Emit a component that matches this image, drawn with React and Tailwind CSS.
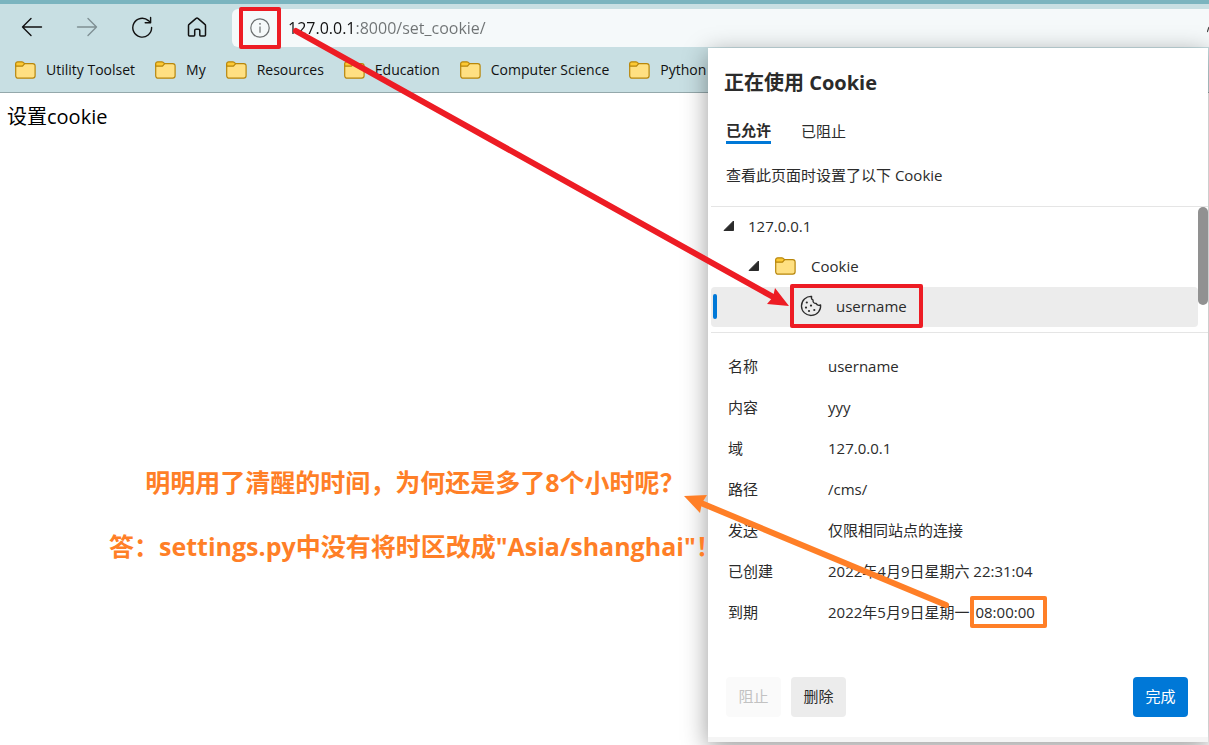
import { useState } from 'react';

const BOOKMARKS = ['Utility Toolset', 'My', 'Resources', 'Education', 'Computer Science', 'Python'];

const TABS = ['已允许', '已阻止'];

const DETAILS = [
    { label: '名称', value: 'username' },
    { label: '内容', value: 'yyy' },
    { label: '域', value: '127.0.0.1' },
    { label: '路径', value: '/cms/' },
    { label: '发送', value: '仅限相同站点的连接' },
    { label: '已创建', value: '2022年4月9日星期六 22:31:04' },
    { label: '到期', value: '2022年5月9日星期一', time: '08:00:00' }
];

const FolderIcon = () => (
    <svg viewBox="0 0 21 18" className="h-[18px] w-[21px] shrink-0" fill="none" aria-hidden="true">
        <path d="M.7 3.2v11.6a2.4 2.4 0 0 0 2.4 2.4h14.6a2.4 2.4 0 0 0 2.4-2.4V5a2.4 2.4 0 0 0-2.4-2.4H9.6z" fill="#ffe082" stroke="#b8860b" strokeWidth="1.2" />
        <path d="M.7 5.2V2.8A2 2 0 0 1 2.7.8h4.1c.6 0 1.1.2 1.5.6l1.3 1.2-1.5 1.9c-.4.4-.9.7-1.5.7z" fill="#fcc934" stroke="#b8860b" strokeWidth="1.2" strokeLinejoin="round" />
    </svg>
);

const BackIcon = () => (
    <svg viewBox="0 0 22 20" className="h-5 w-[22px]" fill="none" stroke="currentColor" strokeWidth="1.4" strokeLinecap="round" strokeLinejoin="round" aria-hidden="true">
        <path d="M20.5 10h-19M10 1.5 1.5 10l8.5 8.5" />
    </svg>
);

const ForwardIcon = () => (
    <svg viewBox="0 0 22 20" className="h-5 w-[22px]" fill="none" stroke="currentColor" strokeWidth="1.4" strokeLinecap="round" strokeLinejoin="round" aria-hidden="true">
        <path d="M1.5 10h19M12 1.5l8.5 8.5-8.5 8.5" />
    </svg>
);

const ReloadIcon = () => (
    <svg viewBox="0 0 22 22" className="h-[22px] w-[22px]" fill="none" stroke="currentColor" strokeWidth="1.4" strokeLinecap="round" strokeLinejoin="round" aria-hidden="true">
        <path d="M20.6 11.4A9.4 9.4 0 1 1 17.4 4.6l2 1.9M19.6 1.5v5.200h-5.400" />
    </svg>
);

const HomeIcon = () => (
    <svg viewBox="0 0 20 22" className="h-[22px] w-5" fill="none" stroke="currentColor" strokeWidth="1.5" strokeLinejoin="round" aria-hidden="true">
        <path d="M1.5 9.7c0-.5.2-1 .6-1.3l7-6c.5-.5 1.3-.5 1.8 0l7 6c.4.3.6.8.6 1.3v9.3c0 .6-.4 1-1 1h-3.8c-.5 0-.9-.4-.9-.9v-4.5c0-.7-.6-1.3-1.3-1.3H9c-.7 0-1.3.6-1.3 1.3v4.500c0 .5-.4.9-.9.9H2.500c-.6 0-1-.4-1-1z" />
    </svg>
);

const InfoIcon = () => (
    <svg viewBox="0 0 20 20" className="h-5 w-5" fill="none" stroke="#6b6f70" strokeWidth="1.2" aria-hidden="true">
        <circle cx="10" cy="10" r="9.2" />
        <path d="M10 8.5v6.2" />
        <circle cx="10" cy="5.8" r=".9" fill="#6b6f70" stroke="none" />
    </svg>
);

const CookieIcon = () => (
    <svg viewBox="0 0 22 22" className="h-[22px] w-[22px] shrink-0" fill="none" stroke="#2b2b2b" strokeWidth="1.3" strokeLinejoin="round" aria-hidden="true">
        <path d="M11.6 1.3A9.6 9.6 0 1 0 20.6 9.8c-1.5 1-3.6.6-4.3-1.3-2.2.2-3.7-1.4-3.2-3.4-1.4-.6-1.9-2.3-1.5-3.8z" />
        <g fill="#2b2b2b" stroke="none">
            <circle cx="6.8" cy="7.5" r="1.1" />
            <circle cx="11" cy="10.6" r="1.1" />
            <circle cx="6" cy="12.6" r="1.1" />
            <circle cx="9" cy="16" r="1.1" />
            <circle cx="14.3" cy="15" r="1.1" />
        </g>
    </svg>
);

const Expander = () => (
    <svg viewBox="0 0 12 12" className="h-3 w-3 shrink-0" aria-hidden="true">
        <path d="M10.5 1v9.5H1z" fill="#2b2b2b" stroke="#2b2b2b" strokeLinejoin="round" />
    </svg>
);

const RedArrow = () => (
    <svg className="pointer-events-none absolute left-0 top-0 z-20 h-[340px] w-[800px]" fill="none" aria-hidden="true">
        <path d="M296 31 775 298" stroke="#ed1c24" strokeWidth="6" strokeLinecap="round" />
        <path d="M789 306 767 304 773 297 775 288z" fill="#ed1c24" />
    </svg>
);

const OrangeArrow = () => (
    <svg viewBox="0 0 280 130" className="pointer-events-none absolute right-[247px] bottom-[118px] h-[130px] w-[280px]" fill="none" aria-hidden="true">
        <path d="M265 116 20 14" stroke="#ff7f27" strokeWidth="6" strokeLinecap="round" />
        <path d="M3 7 26 6 21 14 19 24z" fill="#ff7f27" />
    </svg>
);

const Toolbar = () => (
    <div className="box-content flex h-[41px] items-center border-t-4 border-[#7bb4bf] pt-0.5 pl-1">
        <button type="button" aria-label="Back" className="flex w-[55px] justify-center"><BackIcon /></button>
        <button type="button" aria-label="Forward" className="flex w-[55px] justify-center text-[#7f9093]"><ForwardIcon /></button>
        <button type="button" aria-label="Reload" className="flex w-[55px] justify-center"><ReloadIcon /></button>
        <button type="button" aria-label="Home" className="flex w-[55px] justify-center"><HomeIcon /></button>
        <div className="mt-[3px] ml-2 flex h-[38px] flex-1 items-center rounded-l-md bg-[#f5f9fa]">
            <button type="button" aria-label="Site information" className="relative ml-[18px]">
                <InfoIcon />
                <span className="absolute -inset-[11px] rounded-xs border-4 border-[#ed1c24]" />
            </button>
            <input
                type="text"
                aria-label="Address"
                defaultValue="127.0.0.1:8000/set_cookie/"
                className="ml-[18px] flex-1 bg-[linear-gradient(90deg,#111_67px,#6f7374_67px)] bg-clip-text text-base text-transparent outline-none"
            />
            <svg viewBox="0 0 2 12" className="mt-1 h-3 w-0.5" aria-hidden="true">
                <path d="M.3 8 2 3" stroke="#444" strokeWidth="1.2" />
            </svg>
        </div>
    </div>
);

const BookmarkBar = () => (
    <nav className="flex h-[46px] items-center gap-5 overflow-hidden border-b border-[#94a8ab] pl-[15px]">
        {BOOKMARKS.map((name) => (
            <a key={name} href="#" className="flex shrink-0 items-center gap-[10px] text-sm">
                <FolderIcon />
                {name}
            </a>
        ))}
    </nav>
);

const CookieTree = () => (
    <div className="relative ml-[3px] border-y border-[#e5e5e5] pb-[5px]">
        <ul>
            <li className="flex h-10 items-center gap-[13px] pb-0.5 pl-3"><Expander />127.0.0.1</li>
            <li className="flex h-10 items-center gap-[15px] pb-0.5 pl-[37px]"><Expander /><FolderIcon />Cookie</li>
            <li className="mr-[10px] flex h-10 items-center rounded-sm bg-[#ececec] pb-0.5 pl-0.5">
                <span className="h-[25px] w-1 rounded-sm bg-[#0078d7]" />
                <span className="relative ml-[83px] flex items-center gap-[14px]">
                    <CookieIcon />
                    username
                    <span className="absolute -inset-x-[10px] -inset-y-[11px] -right-4 rounded-xs border-4 border-[#ed1c24]" />
                </span>
            </li>
        </ul>
        <div className="absolute top-0 right-0 h-[98px] w-[10px] rounded-full bg-[#919191]" />
    </div>
);

const CookieDialog = () => {
    const [tab, setTab] = useState(TABS[0]);

    return (
        <section role="dialog" aria-label="正在使用 Cookie" className="absolute top-12 right-px z-10 w-[500px] border-b-[5px] border-[#f5f5f5] bg-white text-[15px] leading-5 text-[#2b2b2b] shadow-[0_6px_24px_rgba(0,0,0,0.4)]">
            <h1 className="px-4 pt-5 text-xl leading-[30px] font-bold">正在使用 Cookie</h1>
            <div role="tablist" className="mt-[22px] flex items-start gap-[30px] px-[18px]">
                {TABS.map((name) => (
                    <button
                        key={name}
                        type="button"
                        role="tab"
                        aria-selected={tab === name}
                        onClick={() => setTab(name)}
                        className={tab === name ? 'border-b-[3px] border-[#0078d7] pb-px font-bold' : 'pt-px'}
                    >
                        {name}
                    </button>
                ))}
            </div>
            <p className="my-[21px] px-[18px]">查看此页面时设置了以下 Cookie</p>
            <CookieTree />
            <table className="mt-3 ml-5">
                <tbody>
                    {DETAILS.map(({ label, value, time }) => (
                        <tr key={label} className="h-[41px]">
                            <th scope="row" className="w-[100px] text-left font-normal">{label}</th>
                            <td>
                                {value}
                                {time && (
                                    <span className="relative ml-1.5">
                                        {time}
                                        <span className="absolute -inset-x-[5px] -inset-y-1.5 -right-3 rounded-xs border-4 border-[#ff7f27]" />
                                    </span>
                                )}
                            </td>
                        </tr>
                    ))}
                </tbody>
            </table>
            <div className="mt-[45px] flex gap-[10px] pr-5 pb-5 pl-[18px]">
                <button type="button" disabled className="h-10 w-[55px] rounded-sm bg-[#fafafa] pb-0.5 text-[#c2c2c2]">阻止</button>
                <button type="button" className="h-10 w-[55px] rounded-sm bg-[#ececec] pb-0.5">删除</button>
                <button type="button" className="ml-auto h-10 w-[55px] rounded-sm bg-[#0078d7] pb-0.5 text-white">完成</button>
            </div>
            <OrangeArrow />
        </section>
    );
};

const App = () => (
    <div className="relative min-h-screen overflow-hidden bg-white font-['Open_Sans','Noto_Sans_CJK_SC',sans-serif] text-[#111]">
        <header className="bg-[#c8dfe3]">
            <Toolbar />
            <BookmarkBar />
        </header>
        <main className="px-[7px] pt-2">
            <p className="text-xl leading-8 text-black">设置cookie</p>
            <div className="relative z-20 mt-[333px] ml-[102px] w-fit space-y-8 text-center text-[25px] leading-8 font-bold whitespace-nowrap text-[#ff7f27]">
                <p>明明用了清醒的时间，为何还是多了8个小时呢？</p>
                <p>答：settings.py中没有将时区改成"Asia/shanghai"！</p>
            </div>
        </main>
        <CookieDialog />
        <RedArrow />
    </div>
);

export default App;
